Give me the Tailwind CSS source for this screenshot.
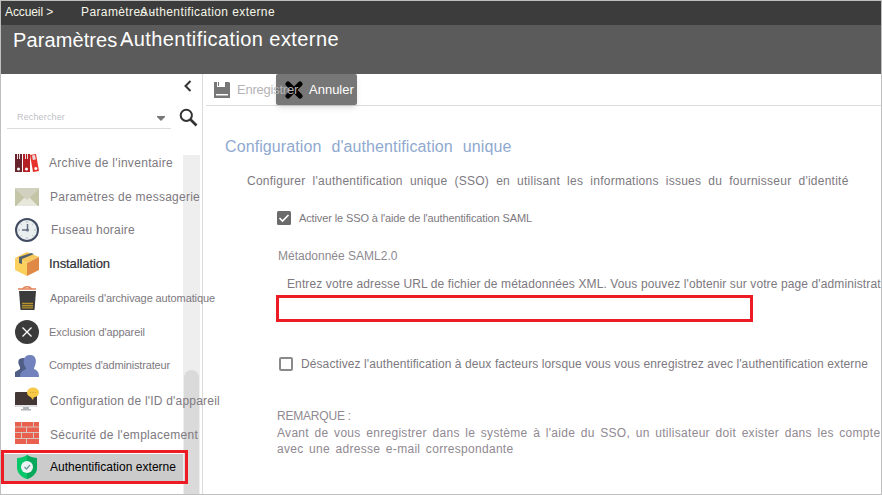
<!DOCTYPE html>
<html lang="fr"><head><meta charset="utf-8"><title>Authentification externe</title>
<script src="https://cdn.jsdelivr.net/npm/@tailwindcss/browser@4"></script></head>
<body class="bg-white font-['Liberation_Sans',Arial,sans-serif]">
<div class="flex h-[495px] w-[882px] flex-col overflow-hidden border border-[#bfbfbf] bg-white whitespace-nowrap text-[#7d7980]">
<nav class="flex h-6 shrink-0 items-start bg-[#3c3c3c] pl-1 text-[12px] leading-[22px] text-[#f4f5e8]"><span class="w-[76px] tracking-[-0.1px]">Accueil &gt;</span><span class="w-[59px] tracking-[0.387px]">Paramètres -</span><span class="tracking-[0.399px]">Authentification externe</span></nav>
<header class="flex h-[49px] shrink-0 items-start bg-[#5b5b5b] pl-3 text-[20px] leading-7 text-white"><span class="mt-px w-[107px] tracking-[0.1px]">Paramètres -</span><span class="tracking-[0.415px]">Authentification externe</span></header>
<div class="flex min-h-0 flex-1">
<aside class="relative z-10 flex w-[202px] shrink-0 flex-col border-r border-[#dcdcdc]">
<div class="flex h-6 justify-end pr-2"><svg class="mt-1.5 size-3" viewBox="0 0 12 12" fill="none" stroke="#333" stroke-width="2"><path d="M8.500 1 3.500 6l5 5"/></svg></div>
<div class="flex h-[48px] items-start pl-1.5"><div class="flex h-[31px] w-[164px] items-center justify-between border-b border-[#dcdcdc] pr-1.5 pl-2.5 text-[9px] text-[#c0bfc6]"><span class="mt-[9px] tracking-[0.15px]">Rechercher</span><svg class="mt-[10px] h-[5px] w-2" viewBox="0 0 8 5"><path fill="#777" d="M0 0h8v1L4 5 0 1z"/></svg></div>
<svg class="mt-2.5 ml-2 size-[19px]" viewBox="0 0 19 19" fill="none" stroke="#333"><circle cx="7.3" cy="7.3" r="5.6" stroke-width="2"/><path stroke-width="2.6" d="m11.5 11.5 6 6"/></svg></div>
<div class="absolute top-[81px] right-[2px] bottom-0 w-[17px] bg-[#eee]"><div class="absolute top-[215px] right-px bottom-0 w-[15px] rounded-t-full bg-[#dadada]"></div></div>
<ul class="relative text-[12px]">
<li class="flex h-[33.8px] items-center gap-[10px] pl-[14px]"><svg class="size-6 shrink-0" viewBox="0 0 24 24"><path fill="#67242c" d="M0 3h7v18H0z"/><path fill="#b52025" d="M8 3h7v18H8z"/><path fill="#e5332c" d="m15 4 6-1 3 17-6 1z"/><path fill="#ead9d8" d="M2 3h1v5H2zM4 3h1v5H4zM10 3h1v5h-1zM12 3h1v5h-1zM17 4.500l3-.5.8 4.500-3 .5z"/><circle cx="3.500" cy="18" r="1.500" fill="#fff"/><circle cx="11.500" cy="18" r="1.500" fill="#fff"/><circle cx="20.800" cy="17.500" r="1.500" fill="#fff"/></svg><span class="tracking-[0.303px]">Archive de l'inventaire</span></li>
<li class="flex h-[33.8px] items-center gap-[11px] pl-[14px]"><svg class="size-6 shrink-0" viewBox="0 0 24 24"><path fill="#c4c5a6" d="M0 3h24v18H0z"/><path fill="#e7e7dc" d="m1 21 8-8h6l8 8z"/><path fill="#d1d1c0" d="M0 3h24v1L12 15 0 4z"/></svg><span class="tracking-[0.247px]">Paramètres de messagerie</span></li>
<li class="flex h-[33.8px] items-center gap-[12px] pl-[14px]"><svg class="size-6 shrink-0" viewBox="0 0 24 24"><circle cx="12" cy="12" r="11" fill="#e9eeef" stroke="#414b62" stroke-width="2"/><path fill="none" stroke="#a9b4ba" d="M12 3v2M12 19v2M3 12h2M19 12h2M5.600 5.600l1 1M17.400 17.400l1 1M5.600 18.400l1-1M17.400 6.600l1-1"/><path fill="none" stroke="#657083" stroke-width="1.500" d="M12.500 6v6H7"/><circle cx="12.500" cy="12" r="1.500" fill="#657083"/></svg><span class="tracking-[0.234px]">Fuseau horaire</span></li>
<li class="flex h-[33.8px] items-center gap-[10px] pl-[14px] text-[13px] text-[#303036]"><svg class="size-6 shrink-0" viewBox="0 0 24 24"><path fill="#f8c95c" d="m0 6 12-6 12 5-12 6z"/><path fill="#fbd05d" d="m0 6 12 5v13L0 18z"/><path fill="#df8944" d="m12 11 12-6v13l-12 6z"/><path fill="#52616a" d="m4 5 12-4 3 1L7 7v5l-3-1z"/></svg><span class="-mt-[2px] tracking-[-0.096px] [-webkit-text-stroke:0.2px]">Installation</span></li>
<li class="flex h-[33.8px] items-center gap-[11px] pl-[14px] text-[11px]"><svg class="size-6 shrink-0" viewBox="0 0 24 24"><path fill="none" stroke="#e28154" stroke-width="1.300" d="M3 3h18M8 3c0-3 8-3 8 0"/><path fill="#3b3b3b" d="M4 5h17l-1.500 19H5.500z"/><path stroke="#b5912d" stroke-width="1.400" d="M7 17.500h11M7 19.700h11M7 21.900h11"/></svg><span class="tracking-[-0.104px]">Appareils d'archivage automatique</span></li>
<li class="flex h-[33.8px] items-center gap-[10px] pl-[14px] text-[11px]"><svg class="size-6 shrink-0" viewBox="0 0 24 24"><circle cx="12" cy="12" r="12" fill="#3b3b3b"/><path stroke="#fff" stroke-width="1.300" d="m7.500 7.500 9 9m0-9-9 9"/></svg><span class="tracking-[-0.075px]">Exclusion d'appareil</span></li>
<li class="flex h-[33.8px] items-center gap-[10px] pl-[14px] text-[11px]"><svg class="size-6 shrink-0" viewBox="0 0 24 24"><path fill="#505e86" d="M0 23v-5l5-3v-2c-3-5-2-9 3-9 5 0 5 4 3 9l3 10z"/><path fill="#7182bd" d="M5 23c0-5 2-6 6-8v-1C7 9 8 1 15 1s7 8 4 13v1c3 1 5 3 5 8z"/></svg><span class="tracking-[-0.167px]">Comptes d'administrateur</span></li>
<li class="flex h-[33.8px] items-center gap-[11px] pl-[14px]"><svg class="size-6 shrink-0" viewBox="0 0 24 24"><rect y="5" width="22" height="15" rx="1" fill="#423735"/><path fill="#dfe1e4" d="M0 18h22v1a1 1 0 0 1-1 1H1a1 1 0 0 1-1-1z"/><path fill="#b0b4b9" d="M8 20h6v2h2v1.500H6V22h2z"/><ellipse cx="18" cy="5.500" rx="6" ry="5" fill="#f7ca47"/><path fill="#f7ca47" d="m15 9 3 4 1-4z"/><path stroke="#d29b32" stroke-dasharray="1 1.500" d="M15 5.500h6"/></svg><span class="mt-[3px] tracking-[0.206px]">Configuration de l'ID d'appareil</span></li>
<li class="flex h-[33.8px] items-center gap-[11px] pl-[14px]"><svg class="size-6 shrink-0" viewBox="0 0 24 24"><path fill="#d7c4bd" d="M0 1h24v22H0z"/><path fill="#e9604f" d="M0 1h6v4.500H0zM7 1h11v4.500H7zM19 1h5v4.500h-5zM0 6.500h11V11H0zM12 6.500h12V11H12zM0 12h6v5H0zM7 12h11v5H7zM19 12h5v5h-5zM0 18h11v5H0zM12 18h12v5H12z"/></svg><span class="mt-[3px] tracking-[0.279px]">Sécurité de l'emplacement</span></li>
<li class="relative flex h-[33.8px] items-center gap-[11px] pl-[14px] text-black"><div class="absolute top-1 bottom-0 left-0 w-[182px] bg-[#cbcbcb]"></div><svg class="relative size-6 shrink-0" viewBox="0 0 24 24"><path fill="#08c76b" d="M12 0c3 2 6 3 10 3v9c0 6-4 10-10 12C6 22 2 18 2 12V3c4 0 7-1 10-3"/><path fill="#07a75c" d="M12 0c3 2 6 3 10 3v9c0 6-4 10-10 12z"/><circle cx="12" cy="12" r="6" fill="#eef4f5"/><path fill="none" stroke="#759a9a" stroke-width="1.400" d="m9.500 12 2 2 3.500-4"/></svg><span class="relative tracking-[0.024px]">Authentification externe</span><div class="absolute top-0 left-0 h-[34px] w-[187px] border-[3px] border-[#ed1c24]"></div></li>
</ul></aside>
<main class="flex min-w-0 flex-1 flex-col overflow-hidden">
<div class="ml-[3px] flex h-8 shrink-0 border-b border-[#dcdcdc] text-[13px]"><div class="relative z-10 flex w-[70px] items-center gap-[7px] pl-2 text-[#b5b3b6]"><svg class="size-4 shrink-0" viewBox="0 0 16 16"><path fill="#777" d="M0 0h3v5h8V0h4l1 1v15H0z"/><path fill="#777" d="M4 0h1v4H4z"/><path fill="#fff" d="M2 12h12v1.500H2z"/></svg><span class="tracking-[-0.234px]">Enregistrer</span></div><div class="flex h-[31px] w-[81px] items-center gap-[6px] rounded-xs bg-[#777] pl-[9px] text-white shadow-md"><svg class="size-[18px] shrink-0" viewBox="0 0 18 18"><path stroke="#000" stroke-width="5" stroke-linecap="round" d="m3 3 12 12m0-12L3 15"/></svg><span>Annuler</span></div></div>
<h1 class="mt-[29px] ml-[22px] text-[16px] leading-6 tracking-[0.1px] text-[#8fa9cf] [word-spacing:5.4px]">Configuration d'authentification unique</h1>
<p class="mt-3 ml-[44px] text-[12px] leading-5 tracking-[0.25px] [word-spacing:3.5px]">Configurer l'authentification unique (SSO) en utilisant les informations issues du fournisseur d'identité</p>
<div class="mt-[17px] ml-[74px] flex h-5 items-center gap-[8px] text-[11px] tracking-[-0.12px]"><svg class="size-[14px]" viewBox="0 0 14 14"><rect width="14" height="14" rx="1.500" fill="#6b6b6b"/><path fill="none" stroke="#fff" stroke-width="1.600" d="m2.500 7 3 3 6-6"/></svg><span>Activer le SSO à l'aide de l'authentification SAML</span></div>
<p class="mt-[18px] ml-[75px] text-[12px] leading-5 text-[#8d898f]">Métadonnée SAML2.0</p>
<p class="mt-2 ml-[84px] text-[12px] leading-5 tracking-[0.112px]">Entrez votre adresse URL de fichier de métadonnées XML. Vous pouvez l'obtenir sur votre page d'administrat</p>
<div class="mt-px ml-[73px] h-[27px] w-[477px] shrink-0 border-[3px] border-[#ed1c24]"></div>
<div class="mt-[32px] ml-[76px] flex h-5 items-center gap-[8px] text-[12px] tracking-[0.094px]"><div class="size-[14px] rounded-xs border-2 border-[#8a8a8a]"></div><span>Désactivez l'authentification à deux facteurs lorsque vous vous enregistrez avec l'authentification externe</span></div>
<div class="mt-[34px] ml-[74px] text-[12px] leading-[16.5px] tracking-[0.3px] text-[#908991]"><p class="tracking-[-0.2px]">REMARQUE :</p><p class="[word-spacing:1.95px]">Avant de vous enregistrer dans le système à l'aide du SSO, un utilisateur doit exister dans les compte</p><p class="[word-spacing:1.9px]">avec une adresse e-mail correspondante</p></div>
</main></div></div>
</body></html>
